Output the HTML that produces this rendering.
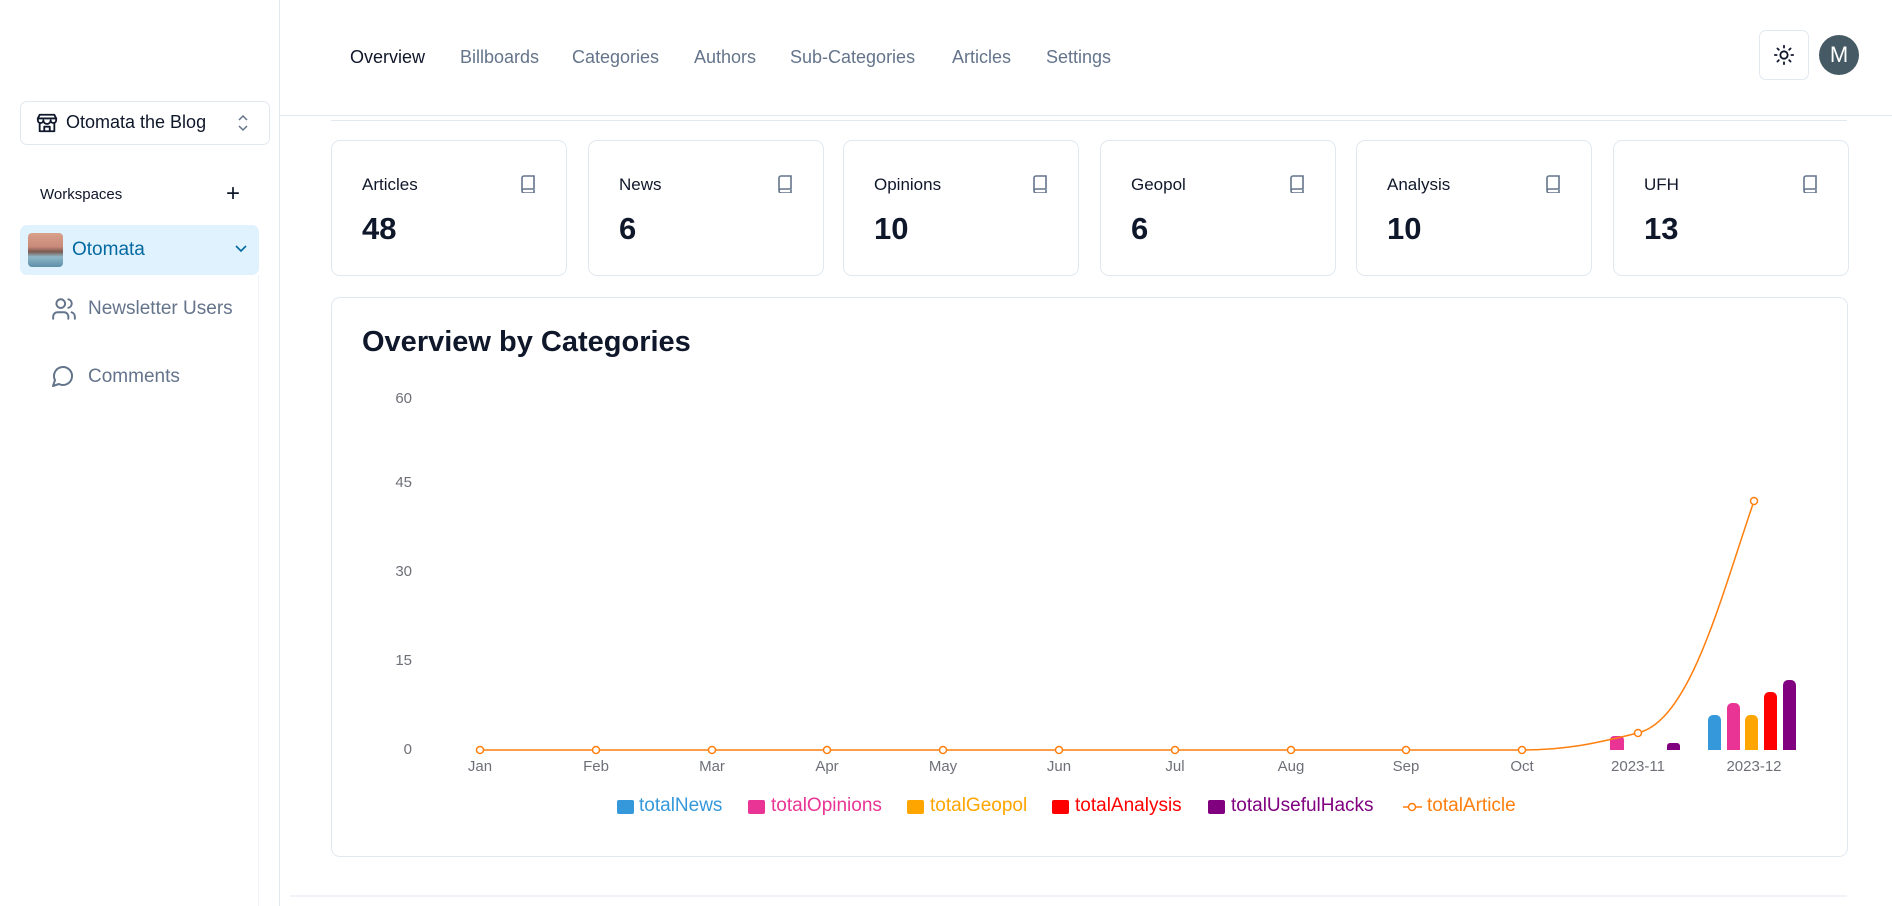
<!DOCTYPE html>
<html><head><meta charset="utf-8"><style>
*{box-sizing:border-box;margin:0;padding:0}
body{width:1892px;height:906px;background:#fff;font-family:"Liberation Sans",sans-serif;color:#0f172a;position:relative;overflow:hidden}
.abs{position:absolute}
.nav a{position:absolute;top:47px;font-size:18px;color:#64748b;text-decoration:none}
.card{position:absolute;top:140px;width:236px;height:136px;border:1px solid #e2e8f0;border-radius:9px;background:#fff}
.card .t{position:absolute;left:30px;top:34px;font-size:17px;color:#0f172a}
.card .n{position:absolute;left:30px;top:70px;font-size:31px;font-weight:bold;color:#0f172a}
.card svg{position:absolute;left:188px;top:34px}
.yl{position:absolute;right:1480px;font-size:15px;color:#6e7079;text-align:right}
.xl{position:absolute;top:758px;font-size:15px;color:#6e7079;transform:translateX(-50%)}
.lg{position:absolute;top:795px;font-size:19px}
.sq{position:absolute;top:800px;width:17px;height:14px;border-radius:2px}
</style></head><body>
<div class="abs" style="left:279px;top:0;width:1px;height:906px;background:#e2e8f0"></div>
<div class="abs" style="left:258px;top:275px;width:1px;height:631px;background:#f1f5f9"></div>
<div class="abs" style="left:20px;top:101px;width:250px;height:44px;border:1px solid #e2e8f0;border-radius:7px"></div>
<svg class="abs" style="left:36px;top:112px" width="22" height="22" viewBox="0 0 24 24" fill="none" stroke="#0f172a" stroke-width="2" stroke-linecap="round" stroke-linejoin="round"><path d="M2 7l2-4h16l2 4"/><path d="M2 7v2a3 3 0 0 0 6 0 3 3 0 0 0 8 0 3 3 0 0 0 6 0V7z"/><path d="M4 12v9h16v-9"/><path d="M9 21v-5h6v5"/></svg>
<div class="abs" style="left:66px;top:112px;font-size:18px;color:#0f172a">Otomata the Blog</div>
<svg class="abs" style="left:236px;top:114px" width="14" height="18" viewBox="0 0 14 18" fill="none" stroke="#64748b" stroke-width="1.5"><path d="M3 6l4-4 4 4M3 12l4 4 4-4"/></svg>
<div class="abs" style="left:40px;top:186px;font-size:15px;color:#0f172a">Workspaces</div>
<div class="abs" style="left:226px;top:182px;font-size:24px;color:#0f172a;line-height:24px">+</div>
<div class="abs" style="left:20px;top:225px;width:239px;height:50px;background:#e0f2fe;border-radius:7px"></div>
<div class="abs" style="left:28px;top:233px;width:35px;height:34px;border-radius:4px;background:linear-gradient(#d9a08a 0%,#c98a7a 40%,#7a5a50 55%,#8fb8c8 70%,#5e8ea8 100%)"></div>
<div class="abs" style="left:72px;top:239px;font-size:19px;color:#0369a1">Otomata</div>
<svg class="abs" style="left:234px;top:244px" width="14" height="10" viewBox="0 0 14 10" fill="none" stroke="#0369a1" stroke-width="1.6"><path d="M2 2l5 5 5-5"/></svg>
<svg class="abs" style="left:50px;top:296px" width="28" height="26" viewBox="0 0 24 24" fill="none" stroke="#64748b" stroke-width="1.8" stroke-linecap="round"><circle cx="9" cy="7" r="4"/><path d="M2 21v-2a4 4 0 0 1 4-4h6a4 4 0 0 1 4 4v2"/><path d="M16 3.1a4 4 0 0 1 0 7.8"/><path d="M22 21v-2a4 4 0 0 0-3-3.9"/></svg>
<div class="abs" style="left:88px;top:298px;font-size:19px;color:#64748b">Newsletter Users</div>
<svg class="abs" style="left:51px;top:364px" width="24" height="24" viewBox="0 0 24 24" fill="none" stroke="#64748b" stroke-width="2" stroke-linejoin="round"><path d="M7.9 20A9 9 0 1 0 4 16.1L2 22z"/></svg>
<div class="abs" style="left:88px;top:366px;font-size:19px;color:#64748b">Comments</div>
<div class="nav">
<a style="left:350px;color:#0f172a">Overview</a><a style="left:460px">Billboards</a><a style="left:572px">Categories</a><a style="left:694px">Authors</a><a style="left:790px">Sub-Categories</a><a style="left:952px">Articles</a><a style="left:1046px">Settings</a>
</div>
<div class="abs" style="left:280px;top:115px;width:1612px;height:1px;background:#e2e8f0"></div>
<div class="abs" style="left:331px;top:120px;width:1516px;height:1px;background:#e2e8f0"></div>
<div class="abs" style="left:1759px;top:30px;width:50px;height:50px;border:1px solid #e2e8f0;border-radius:7px"></div>
<svg class="abs" style="left:1773px;top:44px" width="22" height="22" viewBox="0 0 24 24" fill="none" stroke="#0f172a" stroke-width="2" stroke-linecap="round"><circle cx="12" cy="12" r="4"/><path d="M12 2v2M12 20v2M4.9 4.9l1.4 1.4M17.7 17.7l1.4 1.4M2 12h2M20 12h2M6.3 17.7l-1.4 1.4M19.1 4.9l-1.4 1.4"/></svg>
<div class="abs" style="left:1819px;top:35px;width:40px;height:40px;border-radius:50%;background:#455a64;color:#fff;font-size:22px;text-align:center;line-height:40px">M</div>
<div class="card" style="left:331px"><div class="t">Articles</div><div class="n">48</div><svg width="16" height="18" viewBox="0 0 16 18" fill="none" stroke="#64748b" stroke-width="1.6"><path d="M2 15V3a2 2 0 0 1 2-2h10v13H4a2 2 0 0 0-2 2 2 2 0 0 0 2 2h10v-3"/></svg></div>
<div class="card" style="left:588px"><div class="t">News</div><div class="n">6</div><svg width="16" height="18" viewBox="0 0 16 18" fill="none" stroke="#64748b" stroke-width="1.6"><path d="M2 15V3a2 2 0 0 1 2-2h10v13H4a2 2 0 0 0-2 2 2 2 0 0 0 2 2h10v-3"/></svg></div>
<div class="card" style="left:843px"><div class="t">Opinions</div><div class="n">10</div><svg width="16" height="18" viewBox="0 0 16 18" fill="none" stroke="#64748b" stroke-width="1.6"><path d="M2 15V3a2 2 0 0 1 2-2h10v13H4a2 2 0 0 0-2 2 2 2 0 0 0 2 2h10v-3"/></svg></div>
<div class="card" style="left:1100px"><div class="t">Geopol</div><div class="n">6</div><svg width="16" height="18" viewBox="0 0 16 18" fill="none" stroke="#64748b" stroke-width="1.6"><path d="M2 15V3a2 2 0 0 1 2-2h10v13H4a2 2 0 0 0-2 2 2 2 0 0 0 2 2h10v-3"/></svg></div>
<div class="card" style="left:1356px"><div class="t">Analysis</div><div class="n">10</div><svg width="16" height="18" viewBox="0 0 16 18" fill="none" stroke="#64748b" stroke-width="1.6"><path d="M2 15V3a2 2 0 0 1 2-2h10v13H4a2 2 0 0 0-2 2 2 2 0 0 0 2 2h10v-3"/></svg></div>
<div class="card" style="left:1613px"><div class="t">UFH</div><div class="n">13</div><svg width="16" height="18" viewBox="0 0 16 18" fill="none" stroke="#64748b" stroke-width="1.6"><path d="M2 15V3a2 2 0 0 1 2-2h10v13H4a2 2 0 0 0-2 2 2 2 0 0 0 2 2h10v-3"/></svg></div>
<div class="abs" style="left:331px;top:297px;width:1517px;height:560px;border:1px solid #e2e8f0;border-radius:9px"></div>
<div class="abs" style="left:362px;top:326px;font-size:29px;font-weight:bold;color:#0f172a">Overview by Categories</div>
<div class="yl" style="top:390px">60</div>
<div class="yl" style="top:474px">45</div>
<div class="yl" style="top:563px">30</div>
<div class="yl" style="top:652px">15</div>
<div class="yl" style="top:741px">0</div>
<div class="xl" style="left:480px">Jan</div><div class="xl" style="left:596px">Feb</div><div class="xl" style="left:712px">Mar</div><div class="xl" style="left:827px">Apr</div><div class="xl" style="left:943px">May</div><div class="xl" style="left:1059px">Jun</div><div class="xl" style="left:1175px">Jul</div><div class="xl" style="left:1291px">Aug</div><div class="xl" style="left:1406px">Sep</div><div class="xl" style="left:1522px">Oct</div><div class="xl" style="left:1638px">2023-11</div><div class="xl" style="left:1754px">2023-12</div>
<svg class="abs" style="left:0;top:0" width="1892" height="906">
<g>
<path d="M1610 750V740a4 4 0 0 1 4-4h6a4 4 0 0 1 4 4V750z" fill="#ea3495"/>
<path d="M1667 750V746a3 3 0 0 1 3-3h7a3 3 0 0 1 3 3V750z" fill="#800080"/>
<rect x="1708" y="715" width="13" height="40" rx="5" fill="#3498db"/>
<rect x="1727" y="703" width="13" height="52" rx="5" fill="#ea3495"/>
<rect x="1745" y="715" width="13" height="40" rx="5" fill="#ffa500"/>
<rect x="1764" y="692" width="13" height="63" rx="5" fill="#ff0000"/>
<rect x="1783" y="680" width="13" height="75" rx="5" fill="#800080"/>
<rect x="1700" y="750" width="110" height="10" fill="#fff"/>
</g>
<path d="M480 750H1522C1570 750 1600 742 1638 733C1690 720 1720 600 1754 501" fill="none" stroke="#ff7f0e" stroke-width="1.5"/>
<g fill="#fff" stroke="#ff7f0e" stroke-width="1.5">
<circle cx="480" cy="750" r="3.5"/><circle cx="596" cy="750" r="3.5"/><circle cx="712" cy="750" r="3.5"/><circle cx="827" cy="750" r="3.5"/><circle cx="943" cy="750" r="3.5"/><circle cx="1059" cy="750" r="3.5"/><circle cx="1175" cy="750" r="3.5"/><circle cx="1291" cy="750" r="3.5"/><circle cx="1406" cy="750" r="3.5"/><circle cx="1522" cy="750" r="3.5"/><circle cx="1638" cy="733" r="3.5"/><circle cx="1754" cy="501" r="3.5"/>
</g>
<line x1="1403" y1="807" x2="1422" y2="807" stroke="#ff7f0e" stroke-width="1.5"/><circle cx="1412" cy="807" r="3.5" fill="#fff" stroke="#ff7f0e" stroke-width="1.5"/>
<line x1="290" y1="896" x2="1847" y2="896" stroke="#e2e8f0"/>
</svg>
<div class="sq" style="left:617px;background:#3498db"></div><div class="lg" style="left:639px;color:#3498db">totalNews</div>
<div class="sq" style="left:748px;background:#ea3495"></div><div class="lg" style="left:771px;color:#ea3495">totalOpinions</div>
<div class="sq" style="left:907px;background:#ffa500"></div><div class="lg" style="left:930px;color:#ffa500">totalGeopol</div>
<div class="sq" style="left:1052px;background:#ff0000"></div><div class="lg" style="left:1075px;color:#ff0000">totalAnalysis</div>
<div class="sq" style="left:1208px;background:#800080"></div><div class="lg" style="left:1231px;color:#800080">totalUsefulHacks</div>
<div class="lg" style="left:1427px;color:#ff7f0e">totalArticle</div>
</body></html>
